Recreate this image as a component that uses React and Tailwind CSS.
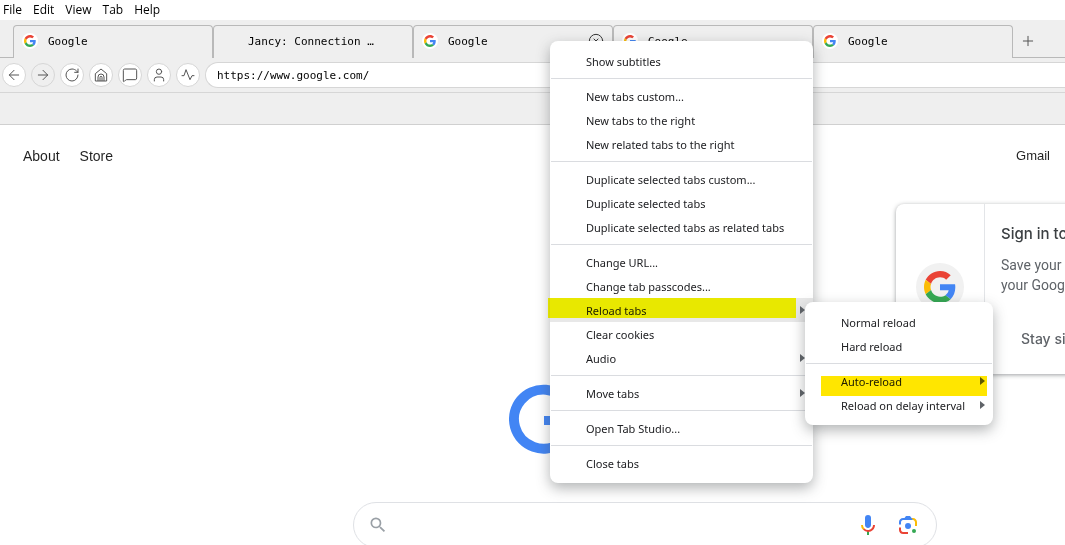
import React from 'react';
import { ArrowLeft, ArrowRight, RotateCw, MessageSquare, User, Plus, CircleX } from 'lucide-react';

const HomeIcon = ({ className }) => (
  <svg viewBox="0 0 24 24" className={className} fill="none" stroke="currentColor" strokeWidth="1.5" strokeLinejoin="round">
    <path d="M3.5 10L12 3l8.5 7v11H3.500zM7.500 21v-6a4.500 4.500 0 0 1 9 0v6M10.500 21v-5.500a1.500 1.500 0 0 1 3 0V21" />
  </svg>
);

const PulseIcon = ({ className }) => (
  <svg viewBox="0 0 24 24" className={className} fill="none" stroke="currentColor" strokeWidth="1.5" strokeLinecap="round" strokeLinejoin="round">
    <path d="M21 13h-3l-3 6L9 4l-3 9H3" />
  </svg>
);

const MENUS = ['File', 'Edit', 'View', 'Tab', 'Help'];

const TABS = [
  { id: 1, title: 'Google', google: true },
  { id: 2, title: 'Jancy: Connection …', google: false },
  { id: 3, title: 'Google', google: true, closable: true },
  { id: 4, title: 'Google', google: true },
  { id: 5, title: 'Google', google: true },
];

const TOOLS = [
  { label: 'Back', Icon: ArrowLeft },
  { label: 'Forward', Icon: ArrowRight, disabled: true },
  { label: 'Reload', Icon: RotateCw },
  { label: 'Home', Icon: HomeIcon },
  { label: 'Comments', Icon: MessageSquare },
  { label: 'Profile', Icon: User },
  { label: 'Activity', Icon: PulseIcon },
];

// Each inner array is one group, groups are split by a separator
const TAB_MENU = [
  [{ label: 'Show subtitles' }],
  [
    { label: 'New tabs custom...' },
    { label: 'New tabs to the right' },
    { label: 'New related tabs to the right' },
  ],
  [
    { label: 'Duplicate selected tabs custom...' },
    { label: 'Duplicate selected tabs' },
    { label: 'Duplicate selected tabs as related tabs' },
  ],
  [
    { label: 'Change URL...' },
    { label: 'Change tab passcodes...' },
    { label: 'Reload tabs', submenu: true, active: true, mark: 'left-[-2px] right-[17px] top-0 bg-[#ffff00]' },
    { label: 'Clear cookies' },
    { label: 'Audio', submenu: true },
  ],
  [{ label: 'Move tabs', submenu: true }],
  [{ label: 'Open Tab Studio...' }],
  [{ label: 'Close tabs' }],
];

const RELOAD_MENU = [
  [{ label: 'Normal reload' }, { label: 'Hard reload' }],
  [
    { label: 'Auto-reload', submenu: true, mark: 'left-4 right-[6px] top-[7px] bg-[#ffe600]' },
    { label: 'Reload on delay interval', submenu: true },
  ],
];

const GoogleG = ({ className }) => (
  <svg viewBox="0 0 48 48" className={className} aria-hidden="true">
    <path fill="#EA4335" d="M24 9.5c3.54 0 6.71 1.22 9.21 3.6l6.85-6.85C35.9 2.38 30.47 0 24 0 14.62 0 6.51 5.38 2.56 13.22l7.98 6.19C12.43 13.72 17.74 9.5 24 9.5z" />
    <path fill="#4285F4" d="M46.98 24.55c0-1.57-.15-3.09-.38-4.55H24v9.02h12.94c-.58 2.96-2.26 5.48-4.78 7.18l7.73 6c4.51-4.18 7.09-10.36 7.09-17.65z" />
    <path fill="#FBBC05" d="M10.53 28.59c-.48-1.45-.76-2.99-.76-4.59s.27-3.14.76-4.59l-7.98-6.19C.92 16.46 0 20.12 0 24c0 3.88.92 7.54 2.56 10.78l7.97-6.19z" />
    <path fill="#34A853" d="M24 48c6.48 0 11.93-2.13 15.89-5.81l-7.73-6c-2.15 1.45-4.92 2.3-8.16 2.3-6.26 0-11.57-4.22-13.47-9.91l-7.98 6.19C6.51 42.62 14.62 48 24 48z" />
  </svg>
);

const MicIcon = () => (
  <svg viewBox="0 0 24 24" className="h-6 w-6" aria-hidden="true">
    <path fill="#4285f4" d="M12 15c1.66 0 3-1.31 3-2.97V5.01a3 3 0 0 0-6 0v7.02C9 13.69 10.34 15 12 15z" />
    <path fill="#34a853" d="M11 18.08h2V22h-2z" />
    <path fill="#fbbc04" d="M7.05 16.87A6.78 6.78 0 0 1 5 12h2c0 1.45.56 2.42 1.47 3.38v.32l-1.15 1.18z" />
    <path fill="#ea4335" d="M12 16.93a4.97 4.97 0 0 1-3.54-1.55l-1.41 1.49A6.8 6.8 0 0 0 12 18.94c3.87 0 6.99-2.92 6.99-7H17c0 2.92-2.24 4.99-5 4.99z" />
  </svg>
);

const LensIcon = () => (
  <svg viewBox="0 0 192 192" className="h-6 w-6" aria-hidden="true">
    <circle fill="#34a853" cx="144.07" cy="144" r="16" />
    <circle fill="#4285f4" cx="96.07" cy="104" r="24" />
    <path fill="#ea4335" d="M24 135.2c0 18.11 14.69 32.8 32.8 32.8H96v-16l-40.1-.1c-8.8 0-15.9-8.19-15.9-17.9v-18H24v19.2z" />
    <path fill="#fbbc04" d="M168 72.8c0-18.11-14.69-32.8-32.8-32.8H116l20 16c8.8 0 16 8.29 16 18v30h16V72.8z" />
    <path fill="#4285f4" d="M112 24H80L68 40H56.8C38.69 40 24 54.69 24 72.8V92h16V74c0-9.71 7.2-18 16-18h80l-24-32z" />
  </svg>
);

const MenuItem = ({ item }) => (
  <li className="relative">
    <button
      type="button"
      className={`flex h-6 w-full items-center justify-between pr-2 pl-9 text-left ${item.active ? 'bg-[#e8e8e8]' : ''}`}
    >
      <span className="pt-[2px]">{item.label}</span>
      {item.submenu && (
        <svg viewBox="0 0 5 8" className="h-2 w-[5px]" aria-hidden="true">
          <path d="M0 0L5 4L0 8Z" fill="#5f6368" />
        </svg>
      )}
    </button>
    {/* Highlighter stroke over the row */}
    {item.mark && <span className={`pointer-events-none absolute h-5 mix-blend-multiply ${item.mark}`} />}
  </li>
);

const ContextMenu = ({ groups, className }) => (
  <div
    className={`absolute rounded-lg bg-white py-2 text-[11px] whitespace-nowrap text-[#202124] shadow-[0_5px_14px_rgba(60,64,67,0.4)] ${className}`}
  >
    {groups.map((group, i) => (
      <ul key={group[0].label} className={i > 0 ? 'mt-[5px]' : ''}>
        {i > 0 && <li className="mx-px mb-[5px] border-t border-[#dadce0]" />}
        {group.map((item) => (
          <MenuItem key={item.label} item={item} />
        ))}
      </ul>
    ))}
  </div>
);

const TabStrip = () => (
  <div className="flex h-[38px] items-end">
    <div className="w-[13px] shrink-0 self-stretch border-b border-[#b9b9b9]" />
    {TABS.map((tab) => (
      <div
        key={tab.id}
        className="flex h-[33px] w-[200px] shrink-0 items-center rounded-t border border-b-0 border-[#b9b9b9] pr-2 pl-2"
      >
        <span className={`mb-[2px] flex h-4 w-4 items-center justify-center rounded-full ${tab.google ? 'bg-white' : ''}`}>
          {tab.google && <GoogleG className="h-3 w-3" />}
        </span>
        <span className="ml-[10px] flex-1 truncate font-['DejaVu_Sans_Mono',monospace] text-[11px]">{tab.title}</span>
        {tab.closable && (
          <button type="button" aria-label="Close tab" className="mb-[2px]">
            <CircleX className="h-4 w-4 text-[#333]" strokeWidth={1.5} />
          </button>
        )}
      </div>
    ))}
    <div className="flex h-[33px] flex-1 items-center border-b border-[#b9b9b9] pl-[7px]">
      <button type="button" aria-label="New tab">
        <Plus className="h-4 w-4 text-[#555]" strokeWidth={1.5} />
      </button>
    </div>
  </div>
);

const Toolbar = () => (
  <div className="flex h-[35px] items-center gap-[5px] border-b border-[#d6d6d6] pl-[2px]">
    {TOOLS.map(({ label, Icon, disabled }) => (
      <button
        key={label}
        type="button"
        aria-label={label}
        className={`flex h-6 w-6 shrink-0 items-center justify-center rounded-full border border-[#d6d6d6] text-[#555] ${
          disabled ? 'bg-[#efefef]' : 'bg-white'
        }`}
      >
        <Icon className="h-4 w-4" strokeWidth={1.5} />
      </button>
    ))}
    <input
      type="text"
      aria-label="Address"
      defaultValue="https://www.google.com/"
      className="h-[26px] min-w-0 flex-1 rounded-l-full border border-r-0 border-[#d6d6d6] bg-white pl-[11px] font-['DejaVu_Sans_Mono',monospace] text-[11px] outline-none"
    />
  </div>
);

const SignInCard = () => (
  <section className="absolute top-[79px] left-[896px] flex h-[170px] w-[384px] rounded-lg bg-white shadow-[0_1px_4px_rgba(60,64,67,0.5)]">
    <div className="flex w-[89px] items-center justify-center border-r border-[#e3e5e8] pb-1">
      <div className="flex h-12 w-12 items-center justify-center rounded-full bg-[#f1f1f1]">
        <GoogleG className="h-8 w-8" />
      </div>
    </div>
    <div className="flex-1 pt-5 pl-4 font-['Roboto',sans-serif] text-sm leading-5 text-[#5f6368]">
      <h2 className="font-['Inter',sans-serif] text-[15px] font-medium text-[#3c4043]">Sign in to Google</h2>
      <p className="mt-[11px]">
        Save your passwords securely with
        <br />
        your Google Account
      </p>
      <button type="button" className="mt-[34px] ml-5 font-['Inter',sans-serif] text-sm font-medium">
        Stay signed out
      </button>
    </div>
  </section>
);

const GooglePage = () => (
  <main className="relative flex-1 bg-white font-['Liberation_Sans',sans-serif] text-sm text-black/87">
    <nav className="flex gap-5 pt-[21px] pr-[15px] pl-[23px]">
      <a href="#about">About</a>
      <a href="#store">Store</a>
      <a href="#gmail" className="ml-auto text-[13px] leading-5">
        Gmail
      </a>
    </nav>

    <div className="flex flex-col items-center pt-[218px] pl-[225px]">
      <svg viewBox="0 0 272 70" className="h-[70px] w-[272px]" aria-label="Google">
        <path d="M60 20.3A29.5 29.5 0 1 0 64 35" fill="none" stroke="#4285f4" strokeWidth="10" />
        <path d="M35 32h34v9H35z" fill="#4285f4" />
      </svg>
      <form className="mt-12 flex h-[46px] w-[584px] max-w-full items-center rounded-full border border-[#dfe1e5] pr-4 pl-[14px]">
        <svg viewBox="0 0 24 24" className="h-5 w-5" aria-hidden="true">
          <path
            fill="#9aa0a6"
            d="M15.5 14h-.79l-.28-.27A6.47 6.47 0 0 0 16 9.5 6.5 6.5 0 1 0 9.5 16c1.61 0 3.09-.59 4.23-1.57l.27.28v.79l5 4.99L20.49 19l-4.99-5zm-6 0C7.01 14 5 11.99 5 9.5S7.01 5 9.5 5 14 7.01 14 9.5 11.99 14 9.5 14z"
          />
        </svg>
        <input type="text" aria-label="Search" className="min-w-0 flex-1 px-3 outline-none" />
        <button type="button" aria-label="Search by voice">
          <MicIcon />
        </button>
        <button type="button" aria-label="Search by image" className="ml-4">
          <LensIcon />
        </button>
      </form>
    </div>

    <SignInCard />
  </main>
);

const App = () => {
  return (
    <div className="relative flex h-screen flex-col overflow-hidden bg-[#efefef] font-['Noto_Sans',sans-serif] text-black">
      <header>
        <div className="flex h-5 items-center gap-[11px] bg-white pl-[3px] font-['Open_Sans',sans-serif] text-xs">
          {MENUS.map((name) => (
            <button key={name} type="button">
              {name}
            </button>
          ))}
        </div>
        <TabStrip />
        <Toolbar />
        <div className="h-8 border-b border-[#d0d0d0]" />
      </header>

      <GooglePage />

      <ContextMenu groups={TAB_MENU} className="top-[41px] left-[550px] w-[263px]" />
      <ContextMenu groups={RELOAD_MENU} className="top-[302px] left-[805px] w-[188px]" />
    </div>
  );
};

export default App;
